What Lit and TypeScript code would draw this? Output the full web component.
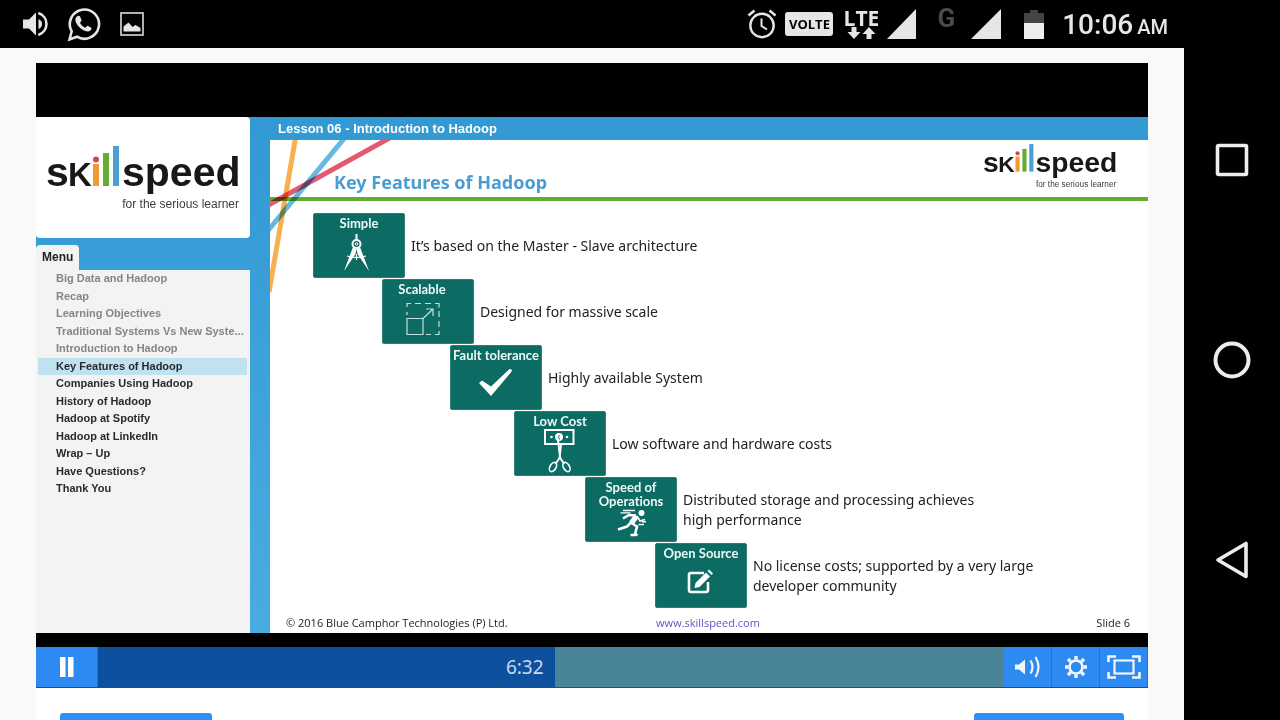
import { LitElement, html, css, svg } from "lit";
import { customElement, property } from "lit/decorators.js";
import { classMap } from "lit/directives/class-map.js";

@customElement("skill-logo")
class SkillLogo extends LitElement {
  static styles = css`
    :host { display: block; }
    .mark { display: block; width: 100%; height: auto; font-family: "Liberation Sans", Arial, sans-serif; }
    .word { font-size: 41px; font-weight: 700; fill: #1a1815; }
    .cap { font-size: 33px; font-weight: 700; fill: #1a1815; }
    .tag { font-size: 12px; fill: #3c3c3c; }
  `;
  render() {
    return html`<svg class="mark" viewBox="0 0 194 66" role="img" aria-label="skillspeed">
      <text class="word" x="0" y="40">s</text>
      <text class="cap" x="22" y="40">K</text>
      <rect x="47" y="18" width="6" height="22" fill="#f09a32" />
      <circle cx="50" cy="13.5" r="3" fill="#c9485f" />
      <rect x="57" y="7" width="6" height="33" fill="#63ad33" />
      <rect x="67" y="0" width="6" height="40" fill="#4a9fd6" />
      <text class="word" x="76" y="40">speed</text>
      <text class="tag" x="193" y="62" text-anchor="end">for the serious learner</text>
    </svg>`;
  }
}

interface Step {
  indent: number;
  label: string[];
  text: string[];
  icon: unknown;
  offset?: boolean;
}

const STEPS: Step[] = [
  {
    indent: 43, label: ["Simple"], text: ["It’s based on the Master - Slave architecture"],
    icon: svg`<path d="M43.5 21v6" stroke-width="2"/><circle cx="43.5" cy="31" r="4" stroke-width="2"/><circle cx="43.5" cy="31" r="1.3" stroke-width="1"/>
      <path d="M40 34L31 58L42.5 41L43.5 36L44.5 41L56 58L47 34L43.5 36Z" fill="#fff" stroke="none"/>
      <path d="M34 43q9.500 3 19 0M43.500 41v6" stroke-width="1.200"/>`,
  },
  {
    indent: 112, label: ["Scalable"], text: ["Designed for massive scale"], offset: true,
    icon: svg`<g stroke="#c4e0dc" stroke-width="1.200"><path d="M25 39.500h16v16h-16zM41 39.500l10-9.500M44 30h7v7"/>
      <path d="M25 36v-3M25 28v-3.500h4M33 24.500h6M43 24.500h6M53 24.500h4v4M57 32v6M57 42v6M57 52v3.500h-4M49 55.500h-5"/></g>`,
  },
  {
    indent: 180, label: ["Fault tolerance"], text: ["Highly available System"],
    icon: svg`<path d="M29 38l3-2.500l9 6L59.500 24q2-.5 2.500 2L41 51z" fill="#fff" stroke="none"/>`,
  },
  {
    indent: 244, label: ["Low Cost"], text: ["Low software and hardware costs"],
    icon: svg`<rect x="31" y="19" width="28.500" height="14" stroke-width="2"/><circle cx="45" cy="26" r="4" fill="#fff" stroke="none"/>
      <circle cx="37.500" cy="26" r="1.300" fill="#fff" stroke="none"/><circle cx="53" cy="26" r="1.300" fill="#fff" stroke="none"/>
      <path d="M45 24v1.500q-1.500 1 0 1.500q1.500 1 0 1.500" stroke="#0c6b63" stroke-width="1"/>
      <path d="M44 29l2.200 18l4 6M47 34l-1.500 13l-4 6" stroke-width="2"/>
      <ellipse cx="39" cy="56" rx="3" ry="5" transform="rotate(30 39 56)" stroke-width="1.600"/><ellipse cx="52.500" cy="56" rx="3" ry="5" transform="rotate(-30 52.500 56)" stroke-width="1.600"/>`,
  },
  {
    indent: 315, label: ["Speed of", "Operations"], text: ["Distributed storage and processing achieves", "high performance"],
    icon: svg`<circle cx="56.500" cy="36" r="3" fill="#fff" stroke="none"/>
      <path d="M38 33.500h12M35.500 35.800h10" stroke-width="1.300"/>
      <path d="M38 41.500l6-3.500l7 .5" stroke-width="2.400"/><path d="M51.500 39l-5 7" stroke-width="5.500"/>
      <path d="M46 45.500l-4 4l-9 3M46.500 46l5.500 3.500l-2 7.500M45.500 58h5.500l1.500-1" stroke-width="2.600"/>
      <path d="M52 39l3 5l5-1.500M53.500 47.500h5.500M57 44.800h4" stroke-width="1.500"/>`,
  },
  {
    indent: 385, label: ["Open Source"], text: ["No license costs; supported by a very large", "developer community"],
    icon: svg`<path d="M49 30H36q-2 0-2 2v15q0 2 2 2h15q2 0 2-2v-8" stroke-width="2.600"/>
      <path d="M39.500 45l1-5L51 29.500l4 4L44.500 44z" fill="#fff" stroke="none"/><path d="M52.500 28l1.500-1.500l4 4l-1.500 1.500z" fill="#fff" stroke="none"/>`,
  },
];

@customElement("feature-step")
class FeatureStep extends LitElement {
  @property({ attribute: false }) step!: Step;
  static styles = css`
    :host { display: flex; align-items: center; gap: 6px; }
    .card {
      flex: none; box-sizing: border-box; width: 92px; height: 65px; padding-top: 2px;
      display: flex; flex-direction: column; background: #0c6b63; border: 1px solid #2b7f78; border-radius: 2px;
      color: #eef8f6; font: 700 13px/14px "Lato", sans-serif; text-align: center; white-space: nowrap;
      font-variant-ligatures: none;
    }
    .offset { padding-right: 12px; }
    .icon { display: block; width: 90px; flex: none; }
    .text { margin: 0; font: 400 14px/20px "Noto Sans", "Open Sans", sans-serif; color: #222; white-space: nowrap; }
    .line { display: block; }
  `;
  render() {
    const s = this.step;
    const top = 3 + s.label.length * 14;
    const h = 64 - top;
    return html`
      <div class="card">
        <div class=${classMap({ offset: !!s.offset })}>${s.label.map((l) => html`<span class="line">${l}</span>`)}</div>
        <svg class="icon" height=${h} viewBox="1 ${top} 90 ${h}" fill="none" stroke="#fff" aria-hidden="true">${s.icon}</svg>
      </div>
      <p class="text">${s.text.map((l) => html`<span class="line">${l}</span>`)}</p>`;
  }
}
SkillLogo; FeatureStep;

const MENU: [string, string][] = [
  ["Big Data and Hadoop", "seen"],
  ["Recap", "seen"],
  ["Learning Objectives", "seen"],
  ["Traditional Systems Vs New Syste...", "seen"],
  ["Introduction to Hadoop", "seen"],
  ["Key Features of Hadoop", "current"],
  ["Companies Using Hadoop", ""],
  ["History of Hadoop", ""],
  ["Hadoop at Spotify", ""],
  ["Hadoop at LinkedIn", ""],
  ["Wrap – Up", ""],
  ["Have Questions?", ""],
  ["Thank You", ""],
];

@customElement("app-root")
class AppRoot extends LitElement {
  static styles = css`
    :host { display: flex; flex-direction: column; height: 100vh; overflow: hidden; background: #000; font-family: "Liberation Sans", Arial, sans-serif; }
    * { box-sizing: border-box; }
    svg { display: block; flex: none; }
    button { border: 0; padding: 0; margin: 0; background: none; cursor: pointer; }

    .status { flex: none; height: 48px; display: flex; justify-content: space-between; padding: 0 112px 0 22px; color: #e6e6e6; font-family: Roboto, sans-serif; }
    .group { display: flex; align-items: center; }
    .left { gap: 17px; }
    .volte { margin: 0 10px 0 9px; width: 48px; height: 24px; border-radius: 3px; background: #e6e6e6; color: #000; font: 700 13px/24px "Open Sans", sans-serif; text-align: center; }
    .lte { width: 36px; display: flex; flex-direction: column; align-items: center; font: 700 21px/18px "Open Sans", sans-serif; }
    .g { align-self: flex-start; margin: 4px 16px 0 20px; font: 700 26px/28px Roboto, sans-serif; color: #4a4a4a; }
    .battery { margin: 0 18px 0 23px; }
    .time { font-size: 28px; line-height: 48px; font-weight: 500; padding-top: 4px; }
    .ampm { font-size: 20px; margin-left: 4px; }

    .body { flex: 1; min-height: 0; display: flex; }
    .main { flex: 1; min-width: 0; padding: 15px 36px 0; background: #f9f9f9; display: flex; flex-direction: column; }
    .nav { flex: none; width: 96px; display: flex; flex-direction: column; align-items: center; gap: 160px; padding-top: 92px; }
    .navbtn { width: 40px; height: 40px; }

    .player { flex: none; background: #000; padding-top: 54px; }
    .course { display: grid; grid-template-columns: 214px 1fr; column-gap: 20px; background: linear-gradient(#3299d3, #4aabe2); }
    .side { display: flex; flex-direction: column; }
    .brand { background: #fff; border-radius: 0 4px 4px 4px; padding: 29px 10px 26px; }
    .tab { align-self: flex-start; margin-top: 7px; padding: 0 6px; background: #f3f3f3; border-radius: 4px 4px 0 0; font-size: 12px; line-height: 25px; font-weight: 700; color: #222; }
    .panel { flex: 1; background: #f3f3f3; padding: 0 3px 0 2px; }
    .list { margin: 0; padding: 0; list-style: none; display: grid; grid-auto-rows: 1fr; height: 228px; }
    .item { display: flex; align-items: flex-start; padding-left: 18px; }
    .link { font-size: 11px; line-height: 16px; font-weight: 700; color: #2a2a2a; text-decoration: none; white-space: nowrap; }
    .seen .link { color: #858585; }
    .current { background: #c0e1f0; }

    .stage { display: flex; flex-direction: column; min-width: 0; }
    .lesson { margin: 0; padding-left: 8px; font-size: 13px; line-height: 23px; font-weight: 700; color: #fff; }
    .slide { position: relative; flex: 1; background: #fff; display: flex; flex-direction: column; overflow: hidden; }
    .rays { position: absolute; left: 0; top: 0; mix-blend-mode: multiply; }
    .ray { mix-blend-mode: multiply; }
    .head { height: 61px; padding: 4px 31px 0 64px; display: flex; justify-content: space-between; border-bottom: 4px solid #62ac30; }
    .title { margin: 0; padding-top: 25px; font: 700 18px/26px "Noto Sans", "Open Sans", sans-serif; color: #4a9dd3; }
    .smalllogo { width: 134px; }
    .steps { padding: 12px 0 7px; display: flex; flex-direction: column; gap: 1px; }
    .foot { margin-top: auto; padding: 0 18px 2px 16px; display: grid; grid-template-columns: 1fr auto 1fr; font: 400 11px/16px "Open Sans", sans-serif; color: #222; }
    .site { color: #6a50c8; text-decoration: none; }
    .num { text-align: right; }

    .controls { margin-top: 14px; height: 41px; display: flex; border-bottom: 1px solid #1d5088; }
    .ctl { flex: none; width: 48px; display: grid; place-items: center; background: #2d8af0; border: solid #2272cc; border-width: 0 1px 0 0; }
    .play { width: 62px; }
    .track { flex: 1; min-width: 0; display: grid; }
    .seek, .played { grid-area: 1 / 1; }
    .seek { appearance: none; -webkit-appearance: none; width: 100%; height: 100%; margin: 0; background: #4a8499; }
    .seek::-webkit-slider-thumb { -webkit-appearance: none; width: 1px; height: 1px; }
    .played { z-index: 1; pointer-events: none; display: flex; align-items: center; justify-content: flex-end; padding-right: 11px; background: #0c509e; color: #ccd9eb; font: 400 19px/40px "Noto Sans", sans-serif; }

    .below { flex: 1; min-height: 0; background: #fff; padding: 25px 24px 0; display: flex; justify-content: space-between; overflow: hidden; }
    .step { width: 152px; height: 40px; border-radius: 3px; background: #2d8ff8; }
    .next { width: 150px; }
  `;

  render() {
    const c = "#e6e6e6";
    return html`
      <header class="status">
        <div class="group left">
          <svg width="28" height="28" viewBox="22 10 28 28" aria-hidden="true"><path d="M23 19.500h6l7-7v23l-7-7h-6z" fill="${c}"/><path d="M38.500 19v10q3.500-1.500 3.500-5t-3.500-5z" fill="${c}"/><path d="M39 13a11.500 11.500 0 0 1 0 22" transform="translate(-.7 0)" fill="none" stroke="${c}" stroke-width="2.600"/></svg>
          <svg width="34" height="36" viewBox="68 6 34 36" aria-hidden="true"><path d="M70.500 39.500l2.200-8.200A14.600 14.600 0 1 1 78 36.700z" fill="none" stroke="${c}" stroke-width="2.600"/><path d="M78 16.500c1-1 2.500-1 3 0l1.500 3.500c.3 1-1 2-1.500 2.700c1.200 2.500 3 4 5.500 5c.8-.8 1.500-2.200 2.500-1.800l3 1.600c1 .8.300 2.300-.5 3c-2.500 2-6 .5-9-1.500c-3-2.200-7-6.800-6-10.500c.2-.8.800-1.500 1.500-2z" fill="${c}"/></svg>
          <svg width="26" height="26" viewBox="0 0 26 26" aria-hidden="true"><rect x="3" y="2" width="22" height="22" fill="none" stroke="#c4c4c4" stroke-width="1.800"/><path d="M5.500 20.500v-5l5-4l4 4.500l3-2l5 3v3.500z" fill="${c}"/></svg>
        </div>
        <div class="group">
          <svg width="29" height="30" viewBox="747 9 29 30" fill="none" stroke="${c}" aria-hidden="true"><circle cx="762" cy="25.500" r="11.700" stroke-width="2.400"/><path d="M761.500 18.500v7.500l5.500 3.500" stroke-width="2"/><path d="M748.500 15.500l6-5M769.500 10.500l6 5" stroke-width="2.600"/></svg>
          <span class="volte">VOLTE</span>
          <span class="lte">LTE<svg width="28" height="12" viewBox="0 0 28 12" fill="${c}" aria-hidden="true"><path d="M4.500 0h5v5h4L7 12L.5 5h4zM19.500 12h5V7h4L22 0l-6.500 7h4z"/></svg></span>
          <svg width="38" height="32" viewBox="0 0 38 32" aria-hidden="true"><path d="M8 31L37 1v30z" fill="${c}"/></svg>
          <span class="g">G</span>
          <svg width="30" height="32" viewBox="0 0 30 32" aria-hidden="true"><path d="M0 31L30 1v30z" fill="${c}"/></svg>
          <svg class="battery" width="20" height="30" viewBox="0 0 20 30" aria-hidden="true"><path d="M0 4h6V1h8v3h6v26H0z" fill="#444"/><path d="M0 14h20v16H0z" fill="#eee"/></svg>
          <span class="time">10:06<span class="ampm">AM</span></span>
        </div>
      </header>
      <div class="body">
        <main class="main">
          <section class="player">
            <div class="course">
              <aside class="side">
                <div class="brand"><skill-logo></skill-logo></div>
                <div class="tab">Menu</div>
                <nav class="panel"><ul class="list">
                  ${MENU.map(([t, k]) => html`<li class=${classMap({ item: true, seen: k === "seen", current: k === "current" })}><a class="link" href="#">${t}</a></li>`)}
                </ul></nav>
              </aside>
              <div class="stage">
                <h1 class="lesson">Lesson 06 - Introduction to Hadoop</h1>
                <article class="slide">
                  <div class="head">
                    <h2 class="title">Key Features of Hadoop</h2>
                    <skill-logo class="smalllogo"></skill-logo>
                  </div>
                  <svg class="rays" width="140" height="160" viewBox="0 0 140 160" fill="none" stroke-width="5" aria-hidden="true">
                    <path class="ray" d="M26-5L-1 152" stroke="#f7b04f"/><path class="ray" d="M77-5L-4 93" stroke="#66b8e2"/><path class="ray" d="M125-5L-5 67" stroke="#e25a70"/>
                  </svg>
                  <div class="steps">
                    ${STEPS.map((s) => html`<feature-step .step=${s} style="margin-left:${s.indent}px"></feature-step>`)}
                  </div>
                  <footer class="foot"><span>© 2016 Blue Camphor Technologies (P) Ltd.</span><a class="site" href="#">www.skillspeed.com</a><span class="num">Slide 6</span></footer>
                </article>
              </div>
            </div>
            <div class="controls">
              <button class="ctl play" aria-label="Pause"><svg width="14" height="20" viewBox="0 0 14 20" fill="#fff"><path d="M0 0h5.500v20H0zM8 0h5.500v20H8z"/></svg></button>
              <div class="track">
                <input class="seek" type="range" min="0" max="1000" value="505" aria-label="Seek" />
                <span class="played" style="width:50.4%">6:32</span>
              </div>
              <button class="ctl" aria-label="Volume"><svg width="28" height="24" viewBox="0 0 28 24"><path d="M1 9.500h4l6-5v15l-6-5H1z" fill="#f2f6fc"/><path d="M16.500 5.500q4 6.500 0 13M21.500 2q6 10 0 20" fill="none" stroke="#f2f6fc" stroke-width="2.200"/></svg></button>
              <button class="ctl" aria-label="Settings"><svg width="24" height="24" viewBox="-12 -12 24 24" fill="none" stroke="#f2f6fc"><circle r="6.500" stroke-width="2.600"/><path d="M0-7.500V-11M0 7.500V11M-7.500 0H-11M7.500 0H11M5.300-5.300l2.700-2.700M-5.300 5.300l-2.700 2.700M-5.300-5.300L-8-8M5.300 5.300L8 8" stroke-width="3.400"/></svg></button>
              <button class="ctl" aria-label="Full screen"><svg width="34" height="24" viewBox="0 0 34 24" fill="none" stroke="#f2f6fc"><rect x="7.500" y="5.500" width="19" height="13" stroke-width="2.200"/><path d="M1.500 7V1.500H9M25 1.500h7.500V7M32.500 17v5.500H25M9 22.500H1.500V17" stroke-width="2.600"/></svg></button>
            </div>
          </section>
          <section class="below">
            <button class="step" aria-label="Previous"></button>
            <button class="step next" aria-label="Next"></button>
          </section>
        </main>
        <nav class="nav">
          <button class="navbtn" aria-label="Recent apps"><svg width="40" height="40" fill="none" stroke="#ececec" stroke-width="3.600"><rect x="5.500" y="5.500" width="29" height="29" rx="1"/></svg></button>
          <button class="navbtn" aria-label="Home"><svg width="40" height="40" fill="none" stroke="#ececec" stroke-width="4"><circle cx="20" cy="20" r="16.500"/></svg></button>
          <button class="navbtn" aria-label="Back"><svg width="40" height="40" fill="none" stroke="#ececec" stroke-width="3.600" stroke-linejoin="round"><path d="M34 3.500v33L6 20z"/></svg></button>
        </nav>
      </div>`;
  }
}
AppRoot;
